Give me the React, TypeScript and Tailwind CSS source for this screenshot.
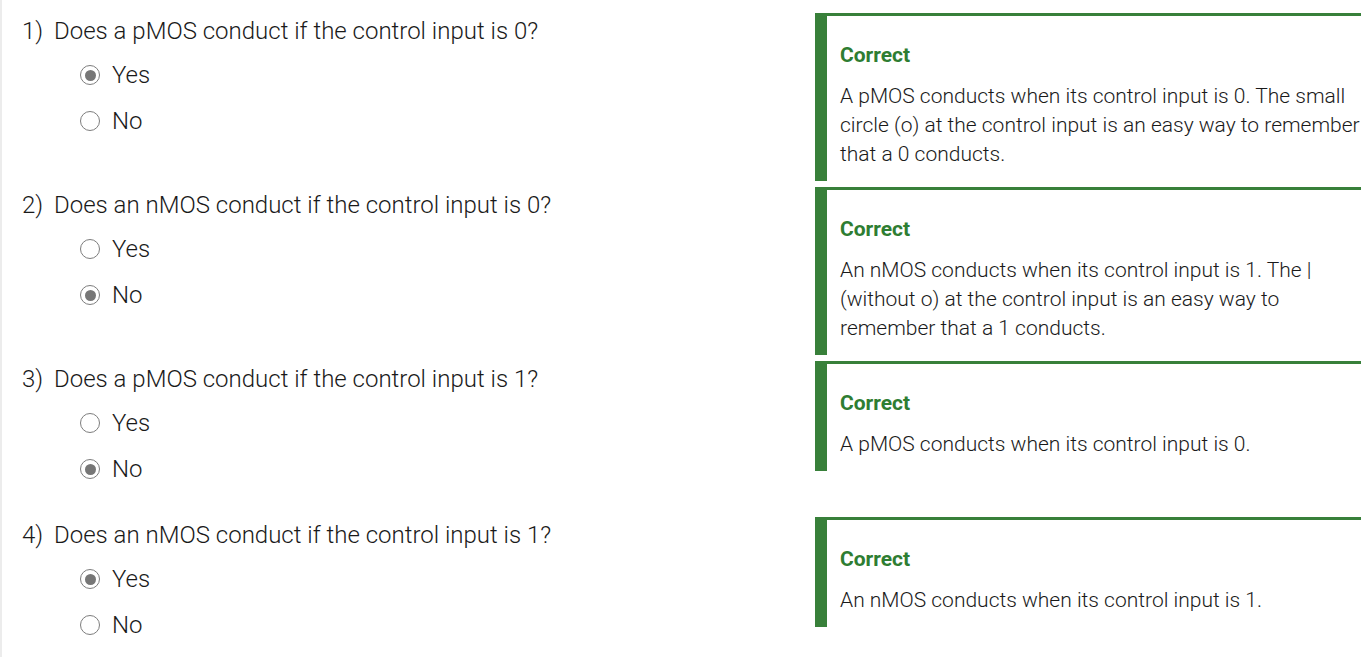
import React from 'react';

type Question = {
  num: number;
  text: string;
  answer: 'Yes' | 'No';
  feedback: string;
};

const QUESTIONS: Question[] = [
  {
    num: 1,
    text: 'Does a pMOS conduct if the control input is 0?',
    answer: 'Yes',
    feedback:
      'A pMOS conducts when its control input is 0. The small circle (o) at the control input is an easy way to remember that a 0 conducts.',
  },
  {
    num: 2,
    text: 'Does an nMOS conduct if the control input is 0?',
    answer: 'No',
    feedback:
      'An nMOS conducts when its control input is 1. The | (without o) at the control input is an easy way to remember that a 1 conducts.',
  },
  {
    num: 3,
    text: 'Does a pMOS conduct if the control input is 1?',
    answer: 'No',
    feedback: 'A pMOS conducts when its control input is 0.',
  },
  {
    num: 4,
    text: 'Does an nMOS conduct if the control input is 1?',
    answer: 'Yes',
    feedback: 'An nMOS conducts when its control input is 1.',
  },
];

function Radio({ checked }: { checked: boolean }) {
  return (
    <span className="flex h-[20px] w-[20px] items-center justify-center rounded-full border-[1.5px] border-[#7d7d7d] bg-white">
      {checked && <span className="h-[11px] w-[11px] rounded-full bg-[#767676]" />}
    </span>
  );
}

function Option({ label, checked }: { label: string; checked: boolean }) {
  return (
    <label className="flex h-[46px] items-center gap-[12px] pl-[78px]">
      <Radio checked={checked} />
      <span>{label}</span>
    </label>
  );
}

function Feedback({ text }: { text: string }) {
  return (
    <div className="w-[560px] shrink-0 border-l-[12px] border-t-[3px] border-[#38803a] pl-[13px] pt-[25px] pb-[12px]">
      <div className="mb-[12px] text-[21px] font-bold leading-[29px] text-[#2e7d32]">Correct</div>
      <p className="w-[524px] text-[21px] font-light leading-[29px] text-[#1a1a1a]">{text}</p>
    </div>
  );
}

export default function App() {
  return (
    <div className="min-h-[657px] w-full overflow-hidden border-l-2 border-[#ececec] bg-white pt-[13px] font-['Roboto','Liberation_Sans',sans-serif] text-[#1a1a1a]">
      <div className="flex flex-col gap-[6px]">
        {QUESTIONS.map((q) => (
          <div key={q.num} className="flex items-start">
            <div className="w-[813px] shrink-0 pb-[19px] text-[24px] font-light">
              <div className="flex h-[35px] items-center pl-[20px]">
                <span className="w-[32px]">{q.num})</span>
                <span>{q.text}</span>
              </div>
              <div className="mt-[4px]">
                <Option label="Yes" checked={q.answer === 'Yes'} />
                <Option label="No" checked={q.answer === 'No'} />
              </div>
            </div>
            <Feedback text={q.feedback} />
          </div>
        ))}
      </div>
    </div>
  );
}
